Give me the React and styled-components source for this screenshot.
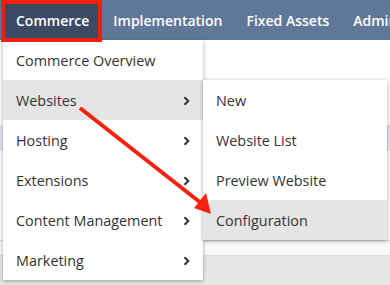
import styled, { createGlobalStyle } from "styled-components";

const GlobalStyle = createGlobalStyle`
  html, body {
    margin: 0;
    padding: 0;
    width: 390px;
    height: 285px;
    overflow: hidden;
    font-family: "Open Sans", "Liberation Sans", sans-serif;
  }
`;

const tabs = ["Commerce", "Implementation", "Fixed Assets", "Administration"];

const mainItems = [
  { label: "Commerce Overview" },
  { label: "Websites", more: true, active: true },
  { label: "Hosting", more: true },
  { label: "Extensions", more: true },
  { label: "Content Management", more: true },
  { label: "Marketing", more: true },
];

const subItems = [
  { label: "New" },
  { label: "Website List" },
  { label: "Preview Website" },
  { label: "Configuration", active: true },
];

const Chevron = () => (
  <svg width="7" height="10" viewBox="0 0 7 10">
    <polyline
      points="1.5,1.2 5.3,5 1.5,8.8"
      fill="none"
      stroke="#333"
      strokeWidth="2"
      strokeLinejoin="miter"
    />
  </svg>
);

const App = () => {
  return (
    <Page>
      <GlobalStyle />
      <NavBar>
        {tabs.map((t, i) => (
          <Tab key={t} current={i === 0}>
            {t}
          </Tab>
        ))}
      </NavBar>

      <Content>
        <WhiteBlock />
        <BlueBand />
        <WhiteBlock2 />
        <LightBand />
        <GrayArea />
      </Content>

      <Highlight />

      <Menu>
        {mainItems.map((item) => (
          <Item key={item.label} active={item.active}>
            <span>{item.label}</span>
            {item.more && <Chevron />}
          </Item>
        ))}
      </Menu>

      <SubMenu>
        {subItems.map((item) => (
          <Item key={item.label} active={item.active}>
            <span>{item.label}</span>
          </Item>
        ))}
      </SubMenu>

      <Arrow width="390" height="285" viewBox="0 0 390 285">
        <line x1="80" y1="108" x2="201" y2="203" stroke="#f5230e" strokeWidth="4" />
        <polygon points="211,214 194,208 206,193" fill="#f5230e" />
      </Arrow>
    </Page>
  );
};

export default App;

const Page = styled.div`
  position: relative;
  width: 390px;
  height: 285px;
  overflow: hidden;
  background: #ffffff;
  display: flex;
  flex-direction: column;
`;

const NavBar = styled.div`
  display: flex;
  align-items: stretch;
  height: 40px;
  padding-left: 4px;
  background-color: #607898;
  white-space: nowrap;
`;

const Tab = styled.div`
  display: flex;
  align-items: center;
  padding: 0 12px;
  color: #ffffff;
  font-size: 14px;
  font-weight: 600;
  background-color: ${(p) => (p.current ? "#3c4a63" : "transparent")};
`;

const Content = styled.div`
  flex: 1;
  display: flex;
  flex-direction: column;
`;

const WhiteBlock = styled.div`
  height: 85px;
  background: #ffffff;
`;

const BlueBand = styled.div`
  height: 26px;
  background: #dfe4ec;
`;

const WhiteBlock2 = styled.div`
  height: 89px;
  background: #ffffff;
  border-bottom: 1px solid #d8d8d8;
`;

const LightBand = styled.div`
  height: 14px;
  background: #f8f8f8;
  border-bottom: 1px solid #dcdcdc;
`;

const GrayArea = styled.div`
  flex: 1;
  background: #e7e7e7;
`;

const Highlight = styled.div`
  position: absolute;
  left: 1px;
  top: 0;
  width: 93px;
  height: 34px;
  border: 4px solid #f0200e;
  z-index: 3;
`;

const Menu = styled.ul`
  position: absolute;
  left: 3px;
  top: 40px;
  width: 200px;
  margin: 0;
  padding: 0;
  list-style: none;
  background: #ffffff;
  box-shadow: 0 1px 4px rgba(0, 0, 0, 0.35);
  z-index: 1;
`;

const SubMenu = styled(Menu)`
  left: 203px;
  top: 80px;
  width: 184px;
  z-index: 2;
`;

const Item = styled.li`
  display: flex;
  align-items: center;
  justify-content: space-between;
  height: 40px;
  padding: 0 13px;
  color: #333333;
  font-size: 14.4px;
  background-color: ${(p) => (p.active ? "#e5e5e5" : "#ffffff")};

  svg {
    margin-top: 1px;
  }
`;

const Arrow = styled.svg`
  position: absolute;
  left: 0;
  top: 0;
  z-index: 4;
  pointer-events: none;
`;
